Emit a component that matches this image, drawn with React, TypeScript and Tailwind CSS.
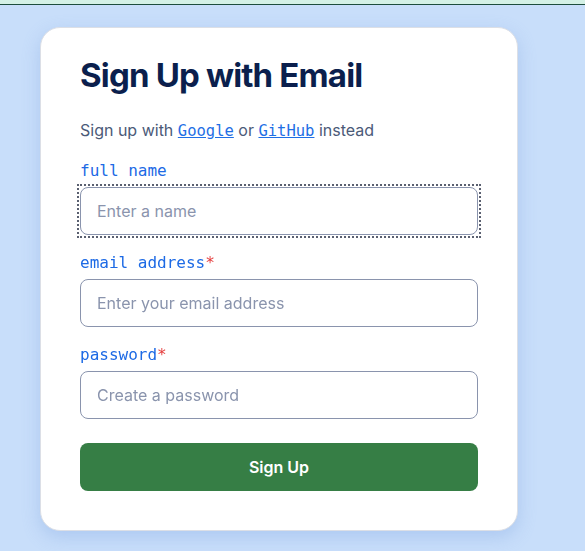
export default function App() {
  return (
    <div className="min-h-[551px] bg-[#c8defa] font-['Inter',sans-serif]">
      <div className="h-[5px] bg-[#d4f1e6] border-b border-[#1d4d3d]" />
      <div className="pt-[22px] pl-10">
        <div className="w-[478px] rounded-[20px] border border-[#dcdfe6] bg-white px-[39px] pt-[27px] pb-[39px] shadow-[0_6px_18px_rgba(110,150,220,0.3)]">
          <h1 className="text-[33px] leading-[40px] font-bold tracking-[-0.025em] text-[#0b1f4d]">
            Sign Up with Email
          </h1>
          <p className="mt-[23px] mb-4 text-base leading-6 text-[#4b5a78]">
            Sign up with{" "}
            <a href="#" className="font-['DejaVu_Sans_Mono',monospace] text-[15.5px] text-[#1f6fe5] underline">
              Google
            </a>{" "}
            or{" "}
            <a href="#" className="font-['DejaVu_Sans_Mono',monospace] text-[15.5px] text-[#1f6fe5] underline">
              GitHub
            </a>{" "}
            instead
          </p>

          <form className="flex flex-col gap-4" onSubmit={(e) => e.preventDefault()}>
            <Field label="full name" placeholder="Enter a name" focused />
            <Field label="email address" placeholder="Enter your email address" required />
            <Field label="password" placeholder="Create a password" required type="password" />
            <button
              type="submit"
              className="mt-2 h-12 w-full rounded-lg bg-[#367e45] text-base font-semibold text-white"
            >
              Sign Up
            </button>
          </form>
        </div>
      </div>
    </div>
  );
}

function Field({
  label,
  placeholder,
  required,
  focused,
  type = "text",
}: {
  label: string;
  placeholder: string;
  required?: boolean;
  focused?: boolean;
  type?: string;
}) {
  return (
    <label className="flex flex-col">
      <span className="mb-1 font-['DejaVu_Sans_Mono',monospace] text-base leading-6 text-[#1d6ae5]">
        {label}
        {required && <span className="text-[#e53e3e]">*</span>}
      </span>
      <div className={focused ? "outline-2 outline-dotted outline-[#5a6070] outline-offset-1" : ""}>
        <input
          type={type}
          placeholder={placeholder}
          autoFocus={focused}
          className="block h-12 w-full rounded-lg border border-[#8a94ad] px-4 text-base text-[#0b1f4d] placeholder:text-[#8a94ad] outline-none caret-[#0b1f4d]"
        />
      </div>
    </label>
  );
}
